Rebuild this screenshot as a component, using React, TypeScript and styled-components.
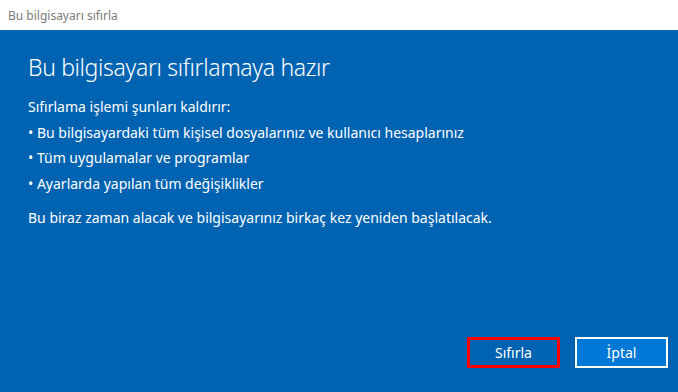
import React from 'react'
import styled, { createGlobalStyle } from 'styled-components'

const GlobalStyle = createGlobalStyle`
  html, body {
    margin: 0;
    padding: 0;
    background: #ffffff;
  }
  body {
    font-family: 'Noto Sans', 'Open Sans', sans-serif;
  }
`

const Window = styled.div`
  width: 678px;
  height: 392px;
  display: flex;
  flex-direction: column;
  overflow: hidden;
`

const TitleBar = styled.div`
  height: 30px;
  flex: none;
  display: flex;
  align-items: center;
  padding-left: 8px;
  background: #ffffff;
  color: #7a7a7a;
  font-size: 12px;
`

const Dialog = styled.div`
  flex: 1;
  display: flex;
  flex-direction: column;
  background: #0063b1;
  color: #ffffff;
  padding: 21px 28px 24px 28px;
`

const Heading = styled.h1`
  margin: 0 0 11px 0;
  font-size: 23px;
  font-weight: 300;
  letter-spacing: -0.35px;
  line-height: 32px;
`

const Line = styled.p<{ gapTop?: number }>`
  margin: ${({ gapTop }) => (gapTop ? gapTop + 'px' : '0')} 0 0 0;
  font-size: 14px;
  line-height: 25.5px;
`

const Footer = styled.div`
  margin-top: auto;
  display: flex;
  justify-content: flex-end;
  gap: 15px;
  margin-right: -18px;
`

const ActionButton = styled.button<{ primary?: boolean }>`
  width: 93px;
  height: 31px;
  box-sizing: border-box;
  font-family: inherit;
  font-size: 14px;
  color: #ffffff;
  background: ${({ primary }) => (primary ? '#0063b1' : '#0078d7')};
  border: ${({ primary }) => (primary ? '3px solid #ff0000' : '2px solid #ffffff')};
  padding: 0;
  cursor: pointer;
`

const items = [
  'Bu bilgisayardaki tüm kişisel dosyalarınız ve kullanıcı hesaplarınız',
  'Tüm uygulamalar ve programlar',
  'Ayarlarda yapılan tüm değişiklikler',
]

export default function App() {
  return (
    <>
      <GlobalStyle />
      <Window>
        <TitleBar>Bu bilgisayarı sıfırla</TitleBar>
        <Dialog>
          <Heading>Bu bilgisayarı sıfırlamaya hazır</Heading>
          <Line>Sıfırlama işlemi şunları kaldırır:</Line>
          {items.map(item => (
            <Line key={item}>• {item}</Line>
          ))}
          <Line gapTop={9}>Bu biraz zaman alacak ve bilgisayarınız birkaç kez yeniden başlatılacak.</Line>
          <Footer>
            <ActionButton primary>Sıfırla</ActionButton>
            <ActionButton>İptal</ActionButton>
          </Footer>
        </Dialog>
      </Window>
    </>
  )
}
